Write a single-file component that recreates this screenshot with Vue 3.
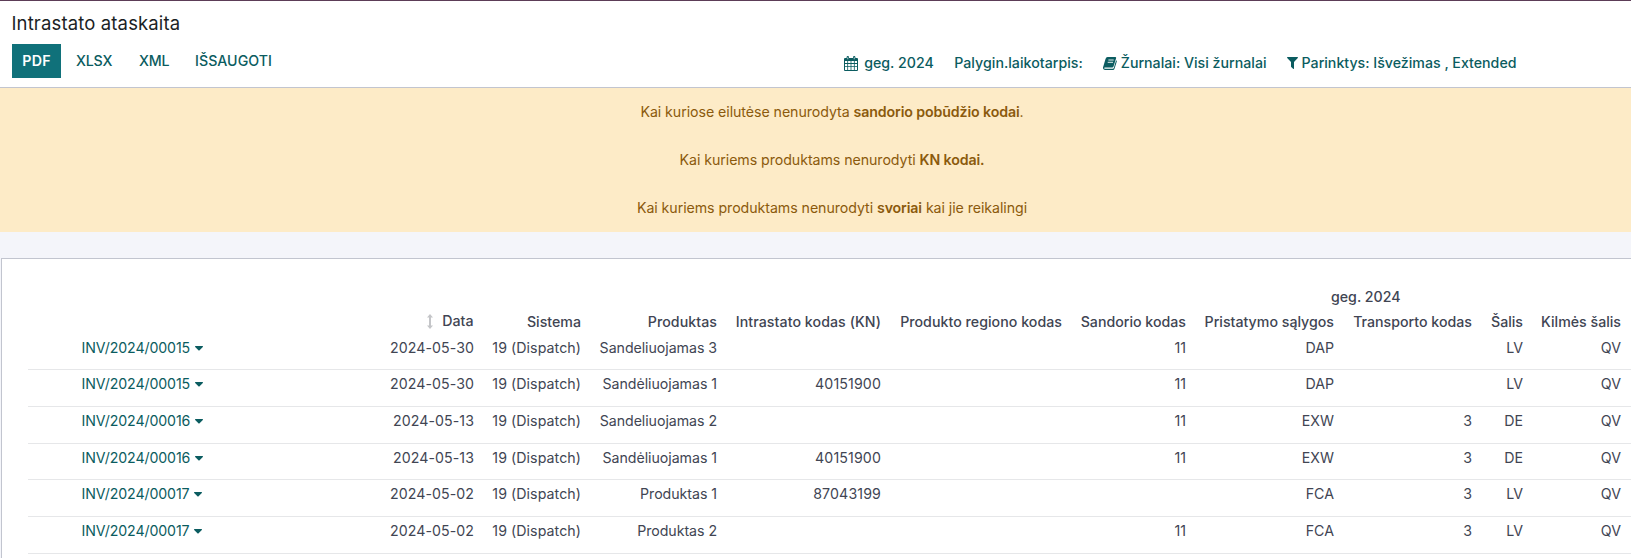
<script setup>
const columns = [
  { key: 'system', label: 'Sistema' },
  { key: 'product', label: 'Produktas', cls: 'ls-mid' },
  { key: 'commodity', label: 'Intrastato kodas (KN)', cls: 'ls-mid' },
  { key: 'region', label: 'Produkto regiono kodas', cls: 'ls-low' },
  { key: 'transaction', label: 'Sandorio kodas' },
  { key: 'incoterm', label: 'Pristatymo sąlygos' },
  { key: 'transport', label: 'Transporto kodas' },
  { key: 'country', label: 'Šalis' },
  { key: 'origin', label: 'Kilmės šalis' },
]

const rows = [
  { name: 'INV/2024/00015', date: '2024-05-30', product: 'Sandeliuojamas 3', commodity: '', transaction: '11', incoterm: 'DAP', transport: '', country: 'LV' },
  { name: 'INV/2024/00015', date: '2024-05-30', product: 'Sandėliuojamas 1', commodity: '40151900', transaction: '11', incoterm: 'DAP', transport: '', country: 'LV' },
  { name: 'INV/2024/00016', date: '2024-05-13', product: 'Sandeliuojamas 2', commodity: '', transaction: '11', incoterm: 'EXW', transport: '3', country: 'DE' },
  { name: 'INV/2024/00016', date: '2024-05-13', product: 'Sandėliuojamas 1', commodity: '40151900', transaction: '11', incoterm: 'EXW', transport: '3', country: 'DE', short: true },
  { name: 'INV/2024/00017', date: '2024-05-02', product: 'Produktas 1', commodity: '87043199', transaction: '', incoterm: 'FCA', transport: '3', country: 'LV' },
  { name: 'INV/2024/00017', date: '2024-05-02', product: 'Produktas 2', commodity: '', transaction: '11', incoterm: 'FCA', transport: '3', country: 'LV' },
].map((r) => ({ system: '19 (Dispatch)', region: '', origin: 'QV', ...r }))
</script>

<template>
  <div class="page">
    <header class="control-panel">
      <h1 class="title">Intrastato ataskaita</h1>
      <div class="toolbar">
        <div class="buttons">
          <button class="btn primary">PDF</button>
          <button class="btn xlsx">XLSX</button>
          <button class="btn xml">XML</button>
          <button class="btn save">IŠSAUGOTI</button>
        </div>
        <div class="filters">
          <span class="filter date">
            <svg width="14" height="15" viewBox="0 0 14 15">
              <path fill="currentColor" fill-rule="evenodd" d="M1 2h1.6V1.2Q2.6 0 3.8 0t1.2 1.2V2h4V1.2Q9 0 10.200 0t1.200 1.200V2H13q1 0 1 1v11q0 1-1 1H1q-1 0-1-1V3q0-1 1-1ZM3.500 1.200v2h.7v-2ZM9.800 1.200v2h.7v-2ZM1 5v2h2.300V5ZM4.100 5v2h2.500V5ZM7.400 5v2h2.500V5ZM10.700 5v2H13V5ZM1 7.900v2.300h2.300V7.900ZM4.100 7.900v2.300h2.500V7.900ZM7.400 7.900v2.300h2.500V7.900ZM10.700 7.900v2.300H13V7.900ZM1 11.100V14h2.300v-2.900ZM4.100 11.100V14h2.500v-2.900ZM7.400 11.100V14h2.500v-2.900ZM10.700 11.100V14H13v-2.900Z" />
            </svg>
            <span>geg. 2024</span>
          </span>
          <span class="filter compare">Palygin.laikotarpis:</span>
          <span class="filter journals">
            <svg width="14" height="13" viewBox="0 0 14 13">
              <path fill="currentColor" d="M4.600 0h7.700q1.100 0 .8 1.200L10.600 9.300q-.4 1.200-1.500 1.200H2q-.9 0-.9.600t.9.600h7.800q.7 0 1-.8l2.300-7.700q.9.400.7 1.300l-2.300 7.300Q11.100 13 9.900 13H2Q.5 13 .1 11.600q-.3-1 .2-2L2.500 2Q3 0 4.600 0Z" />
              <path stroke="#fff" stroke-width=".9" d="M5.400 3h5.300M4.700 5.300H10" />
            </svg>
            <span>Žurnalai: Visi žurnalai</span>
          </span>
          <span class="filter options">
            <svg width="11" height="12" viewBox="0 0 11 12">
              <path fill="currentColor" d="M.6 0h9.800q.9.200.4 1L7 4.900v6.500q-.2.800-.9.400L4.200 10q-.2-.2-.2-.5V4.900L.2 1Q-.3.200.6 0Z" />
            </svg>
            <span>Parinktys: Išvežimas , Extended</span>
          </span>
        </div>
      </div>
    </header>

    <section class="warnings">
      <p>Kai kuriose eilutėse nenurodyta <b>sandorio pobūdžio kodai</b>.</p>
      <p>Kai kuriems produktams nenurodyti <b>KN kodai.</b></p>
      <p>Kai kuriems produktams nenurodyti <b>svoriai</b> kai jie reikalingi</p>
    </section>

    <main class="sheet">
      <div class="period"><span>geg. 2024</span></div>
      <div class="grid head">
        <span></span>
        <span class="sortable">
          <svg width="6" height="15" viewBox="0 0 6 15">
            <path fill="currentColor" d="M3 0 6 3.600H4v7.800h2L3 15 0 11.400h2V3.600H0Z" />
          </svg>
          Data
        </span>
        <span v-for="c in columns" :key="c.key" :class="c.cls">{{ c.label }}</span>
      </div>
      <div v-for="(r, i) in rows" :key="i" class="grid row" :class="{ first: i === 0, short: r.short }">
        <span class="name">
          {{ r.name }}
          <svg width="8" height="5" viewBox="0 0 8 5"><path fill="currentColor" d="M.5 0h7q.8.200.3.900L4.600 4.300Q4 4.800 3.400 4.300L.2.900Q-.3.200.5 0Z" /></svg>
        </span>
        <span class="date-cell">{{ r.date }}</span>
        <span v-for="c in columns" :key="c.key" :class="c.key">{{ r[c.key] }}</span>
      </div>
    </main>
  </div>
</template>

<style>
body {
  overflow: hidden;
}
</style>

<style scoped>
.page {
  width: 1631px;
  height: 558px;
  overflow: hidden;
  display: flex;
  flex-direction: column;
  box-sizing: border-box;
  background: #f4f5fa;
  border-top: 1px solid #5c3d57;
  font-family: Inter, "Noto Sans", sans-serif;
  font-size: 14.2px;
  color: #414553;
  white-space: nowrap;
}
.control-panel {
  height: 87px;
  flex: none;
  box-sizing: border-box;
  padding: 9px 12px 0;
  background: #fff;
  border-bottom: 1px solid #c2c5cf;
}
.title {
  margin: 0 0 0 -0.5px;
  height: 34px;
  line-height: 27px;
  font-size: 18.5px;
  font-weight: 400;
  letter-spacing: 0.14px;
  color: #1b1f25;
}
.toolbar {
  display: flex;
  justify-content: space-between;
}
.buttons {
  display: flex;
}
.btn {
  height: 34px;
  padding: 0;
  border: 0;
  background: none;
  color: #0b5c60;
  font: 500 14.2px/34px Inter, "Noto Sans", sans-serif;
  text-align: left;
}
.primary {
  width: 49px;
  margin-right: 15px;
  background: #10717a;
  color: #fff;
  font-weight: 600;
  letter-spacing: 0.2px;
  text-align: center;
}
.xlsx {
  width: 63px;
  letter-spacing: -0.2px;
}
.xml {
  width: 56px;
  letter-spacing: -0.2px;
}
.save {
  letter-spacing: 0.05px;
}
.filters {
  display: flex;
  padding-right: 102.5px;
  height: 38px;
  color: #0b5c60;
  font-weight: 500;
  line-height: 38px;
}
.filter {
  display: flex;
  align-items: center;
}
.date {
  gap: 6px;
  margin-right: 20.5px;
}
.compare {
  margin-right: 20px;
  letter-spacing: 0.02px;
}
.journals {
  gap: 4px;
  margin-right: 20px;
}
.options {
  gap: 4px;
}
.warnings {
  height: 144px;
  flex: none;
  padding-left: 33px;
  background: #fdebc7;
  color: #8b5a0d;
  text-align: center;
  letter-spacing: -0.06px;
}
.warnings p {
  margin: 0;
  height: 48px;
  line-height: 48px;
}
.warnings b {
  font-weight: 600;
  letter-spacing: -0.12px;
}
.sheet {
  flex: 1;
  margin: 26px 0 0 1px;
  padding: 25px 0 0 26px;
  background: #fff;
  border: solid #c2c5cf;
  border-width: 1px 0 0 1px;
}
.period {
  height: 26px;
  line-height: 26px;
  padding-left: 1303px;
  font-weight: 500;
}
.grid {
  display: grid;
  grid-template-columns: 300px 146px 107px 136px 164px 181px 124px 148px 138px 51px 98px;
  padding-right: 10px;
  text-align: right;
}
.head {
  height: 24px;
  line-height: 23px;
  font-weight: 500;
}
.sortable {
  display: flex;
  align-items: center;
  justify-content: flex-end;
  gap: 9px;
  height: 22px;
  line-height: 22px;
  padding-right: 0.5px;
}
.sortable svg {
  color: #c4c5c8;
}
.ls-mid {
  letter-spacing: 0.06px;
}
.ls-low {
  letter-spacing: 0.03px;
}
.row {
  height: 36px;
  line-height: 27px;
  border-bottom: 1px solid #e6e7e9;
}
.first {
  height: 35px;
}
.short {
  height: 35px;
}
.name {
  display: flex;
  align-items: center;
  gap: 5px;
  height: 27px;
  padding-left: 53.6px;
  color: #0b5c60;
  letter-spacing: -0.13px;
}
.name svg {
  margin-top: 1px;
}
.date-cell,
.system {
  letter-spacing: 0.06px;
}
.product {
  letter-spacing: -0.05px;
}
.commodity {
  letter-spacing: 0.12px;
}
</style>
